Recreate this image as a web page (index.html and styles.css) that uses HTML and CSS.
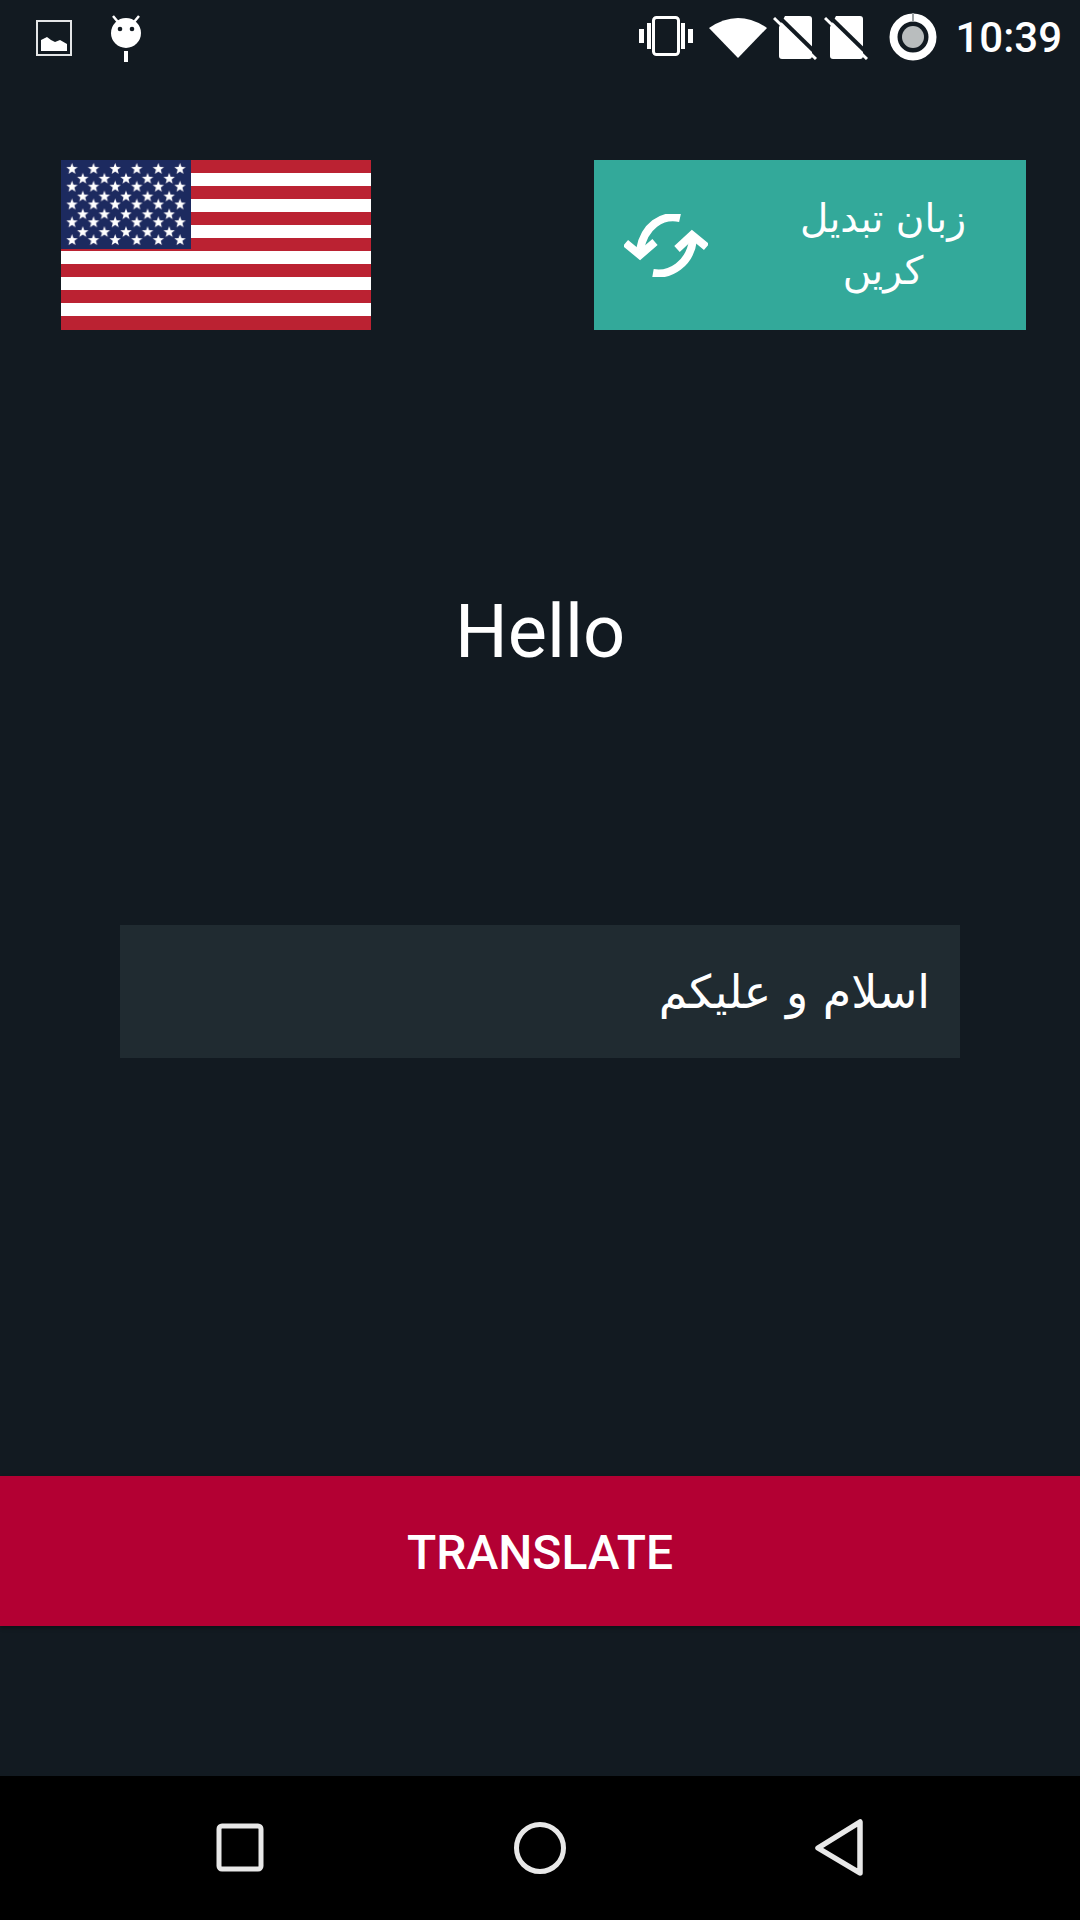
FILE: index.html
```html
<!DOCTYPE html>
<html lang="en">
<head>
<meta charset="utf-8">
<title>Translate</title>
<link rel="stylesheet" href="styles.css">
</head>
<body>
<div class="app">
  <header class="status">
    <div class="status-left">
      <svg class="ic-image" viewBox="0 0 36 36"><rect x="1" y="1" width="34" height="34" fill="none" stroke="#e4e6e7" stroke-width="2"/><path d="M5 31V20L11 17L15 20L19 22L24 20L31 24V31Z" fill="#fff"/></svg>
      <svg class="ic-android" viewBox="0 0 32 47"><path d="M3 1L8 7M29 1L24 7" stroke="#fff" stroke-width="2.5"/><circle cx="16" cy="18" r="15" fill="#fff"/><circle cx="10" cy="14" r="2.3" fill="#121a21"/><circle cx="22" cy="14" r="2.3" fill="#121a21"/><rect x="14" y="36" width="4" height="11" fill="#fff"/></svg>
    </div>
    <div class="status-right">
      <svg class="ic-vibrate" viewBox="0 0 54 40"><rect x="14.500" y="1.500" width="25" height="37" rx="3" fill="none" stroke="#fff" stroke-width="3"/><path d="M0 13h5v14H0zM8 7h4v26H8zM42 7h4v26h-4zM49 13h5v14h-5z" fill="#fff"/></svg>
      <svg class="ic-wifi" viewBox="0 0 58 42"><path d="M0 12Q29-8 58 12L29 42Z" fill="#fff"/></svg>
      <svg class="ic-sim" viewBox="0 0 44 44"><path d="M12 0H36Q39 0 39 3V40Q39 43 36 43H9Q6 43 6 40V11Z" fill="#fff"/><path d="M4 -1L45 39" stroke="#121a21" stroke-width="4"/><path d="M1 2L43 43" stroke="#fff" stroke-width="3"/></svg>
      <svg class="ic-sim" viewBox="0 0 44 44"><path d="M12 0H36Q39 0 39 3V40Q39 43 36 43H9Q6 43 6 40V11Z" fill="#fff"/><path d="M4 -1L45 39" stroke="#121a21" stroke-width="4"/><path d="M1 2L43 43" stroke="#fff" stroke-width="3"/></svg>
      <svg class="ic-ring" viewBox="0 0 48 48"><circle cx="24" cy="24" r="19.500" fill="none" stroke="#fff" stroke-width="8"/><circle cx="24" cy="24" r="11" fill="#b9bdbe"/><rect x="23" y="0" width="2" height="9" fill="#9aa0a2"/></svg>
      <span class="time">10:39</span>
    </div>
  </header>

  <section class="top-row">
    <svg class="flag" viewBox="0 0 310 170">
      <defs>
        <polygon id="star" points="0,-6 1.500,-2 5.700,-1.900 2.400,0.700 3.500,4.800 0,2.500 -3.500,4.800 -2.400,0.700 -5.700,-1.900 -1.500,-2" fill="#fff"/>
        <pattern id="starsA" x="0" y="0" width="21.600" height="17.800" patternUnits="userSpaceOnUse"><use href="#star" x="11" y="9"/></pattern>
        <pattern id="starsB" x="11" y="9.900" width="21.600" height="17.800" patternUnits="userSpaceOnUse"><use href="#star" x="10.800" y="8.900"/></pattern>
        <filter id="soft"><feGaussianBlur stdDeviation="0.700"/></filter>
      </defs>
      <g filter="url(#soft)">
        <rect x="-2" y="-2" width="314" height="174" fill="#fff"/>
        <path d="M-2 -2H312V13H-2ZM-2 26H312V39H-2ZM-2 52H312V65H-2ZM-2 78H312V91H-2ZM-2 104H312V117H-2ZM-2 130H312V143H-2ZM-2 156H312V172H-2Z" fill="#bb2033"/>
        <rect x="-2" y="-2" width="132" height="91" fill="#1f2a5f"/>
        <rect x="0" y="0" width="129.600" height="89" fill="url(#starsA)"/>
        <rect x="11" y="9.900" width="108" height="71.200" fill="url(#starsB)"/>
      </g>
    </svg>
    <div class="switch">
      <svg class="ic-swap" viewBox="0 0 84 63"><g fill="none" stroke="#fff" stroke-width="8"><path d="M56 4C38 0 20 12 16 36"/><path d="M1.500 29L16 41L31 28"/><path d="M29 59C46 62 66 50 69 26"/><path d="M53 35L68 21L82.500 33"/></g></svg>
      <span class="switch-label" dir="rtl">زبان تبدیل کریں</span>
    </div>
  </section>

  <h1 class="word">Hello</h1>

  <div class="field" dir="rtl">اسلام و علیکم</div>

  <button class="translate">TRANSLATE</button>

  <nav class="navbar">
    <svg class="nav-ic" viewBox="0 0 60 60"><rect x="9" y="8" width="42" height="43" rx="3" fill="none" stroke="#e8e8e8" stroke-width="5"/></svg>
    <svg class="nav-ic" viewBox="0 0 60 60"><circle cx="30" cy="30" r="23.500" fill="none" stroke="#e8e8e8" stroke-width="5"/></svg>
    <svg class="nav-ic" viewBox="0 0 60 60"><path d="M50 4V55L8 30Z" fill="none" stroke="#e8e8e8" stroke-width="5.500" stroke-linejoin="round"/></svg>
  </nav>
</div>
</body>
</html>
```

FILE: styles.css
```css
* { box-sizing: border-box; }
html, body { margin: 0; padding: 0; }
body { background: #121a21; color: #fff; font-family: Roboto, sans-serif; }
.app { width: 1080px; height: 1920px; display: flex; flex-direction: column; overflow: hidden; }

.status { height: 72px; display: flex; justify-content: space-between; align-items: center; padding: 0 18px 0 36px; flex: none; }
.status-left, .status-right { display: flex; align-items: center; }
.status-left { gap: 38px; }
.ic-image { width: 36px; height: 36px; margin-top: 4px; }
.ic-android { width: 32px; height: 47px; margin-top: 5px; }
.ic-vibrate { width: 54px; height: 40px; margin-right: 16px; }
.ic-wifi { width: 58px; height: 42px; margin-right: 6px; margin-top: 2px; }
.ic-sim { width: 44px; height: 44px; margin-right: 7px; margin-top: 3px; }
.ic-ring { width: 48px; height: 48px; margin: 2px 18px 0 14px; }
.time { font-size: 42px; font-weight: 500; line-height: 48px; margin-top: 3px; }

.top-row { margin-top: 88px; padding: 0 54px 0 61px; display: flex; justify-content: space-between; flex: none; }
.flag { width: 310px; height: 170px; display: block; }
.switch { width: 432px; height: 170px; background: #33a99a; display: flex; align-items: center; padding-left: 30px; }
.ic-swap { width: 84px; height: 63px; flex: none; }
.switch-label { width: 240px; margin: 0 23px 0 auto; text-align: center; font-family: "DejaVu Sans", sans-serif; font-size: 39px; line-height: 52px; }

.word { margin: 260px 0 0; font-size: 74px; font-weight: 400; line-height: 84px; text-align: center; flex: none; }

.field { margin: 251px 120px 0; height: 133px; background: #202b31; padding: 0 30px; font-family: "DejaVu Sans", sans-serif; font-size: 46px; display: flex; align-items: center; flex: none; }

.translate { margin-top: 418px; height: 150px; width: 100%; border: 0; padding: 2px 0 0; background: #b30033; color: #fff; font-family: Roboto, sans-serif; font-weight: 500; font-size: 48px; box-shadow: 0 2px 4px rgba(0,0,0,.3); flex: none; }

.navbar { margin-top: auto; height: 144px; background: #000; display: flex; justify-content: center; align-items: center; gap: 240px; flex: none; }
.nav-ic { width: 60px; height: 60px; }
```
